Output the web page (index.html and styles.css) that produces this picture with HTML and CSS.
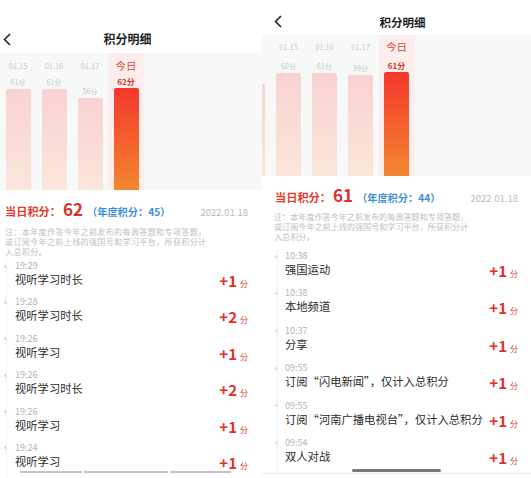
FILE: index.html
```html
<!DOCTYPE html>
<html>
<head>
  <title>积分明细</title>
  <link rel="stylesheet" href="styles.css">
</head>
<body>
  <div class="screens">

    <section class="phone phone-a">
      <header class="topbar">
        <svg class="back" width="8" height="13" viewBox="0 0 8 13"><polyline points="7,1 1.5,6.5 7,12" fill="none" stroke="#222" stroke-width="1.6"/></svg>
        <h1 class="title">积分明细</h1>
      </header>
      <div class="chart">
        <div class="bars">
          <div class="col"><span class="day">01.15</span><span class="score">61分</span><div class="bar" style="height:101px"></div></div>
          <div class="col"><span class="day">01.16</span><span class="score">61分</span><div class="bar" style="height:101px"></div></div>
          <div class="col"><span class="day">01.17</span><span class="score">56分</span><div class="bar" style="height:92px"></div></div>
          <div class="col today"><span class="day">今日</span><span class="score">62分</span><div class="bar" style="height:102px"></div></div>
        </div>
      </div>
      <div class="summary">
        <span class="label">当日积分：</span><span class="total">62</span><span class="year">（年度积分：45）</span><span class="date">2022.01.18</span>
      </div>
      <p class="note">注：本年度作答今年之前发布的每周答题和专项答题，<br>或订阅今年之前上线的强国号和学习平台，所获积分计<br>入总积分。</p>
      <ul class="records">
        <li class="record"><i class="dot"></i><span class="time">19:29</span><span class="name">视听学习时长</span><span class="pts"><b>+1</b>分</span></li>
        <li class="record"><i class="dot"></i><span class="time">19:28</span><span class="name">视听学习时长</span><span class="pts"><b>+2</b>分</span></li>
        <li class="record"><i class="dot"></i><span class="time">19:26</span><span class="name">视听学习</span><span class="pts"><b>+1</b>分</span></li>
        <li class="record"><i class="dot"></i><span class="time">19:26</span><span class="name">视听学习时长</span><span class="pts"><b>+2</b>分</span></li>
        <li class="record"><i class="dot"></i><span class="time">19:26</span><span class="name">视听学习</span><span class="pts"><b>+1</b>分</span></li>
        <li class="record"><i class="dot"></i><span class="time">19:24</span><span class="name">视听学习</span><span class="pts"><b>+1</b>分</span></li>
      </ul>
      <div class="home-bar">
        <span class="seg seg-1"></span><span class="seg seg-2"></span><span class="seg seg-3"></span>
      </div>
    </section>

    <section class="phone phone-b">
      <header class="topbar">
        <svg class="back" width="8" height="13" viewBox="0 0 8 13"><polyline points="7,1 1.5,6.5 7,12" fill="none" stroke="#222" stroke-width="1.6"/></svg>
        <h1 class="title">积分明细</h1>
      </header>
      <div class="chart">
        <div class="bars">
          <div class="col"><span class="day"></span><div class="bar" style="height:92px"></div></div>
          <div class="col"><span class="day">01.15</span><span class="score">60分</span><div class="bar" style="height:103px"></div></div>
          <div class="col"><span class="day">01.16</span><span class="score">61分</span><div class="bar" style="height:103px"></div></div>
          <div class="col"><span class="day">01.17</span><span class="score">59分</span><div class="bar" style="height:101px"></div></div>
          <div class="col today"><span class="day">今日</span><span class="score">61分</span><div class="bar" style="height:104px"></div></div>
        </div>
      </div>
      <div class="summary">
        <span class="label">当日积分：</span><span class="total">61</span><span class="year">（年度积分：44）</span><span class="date">2022.01.18</span>
      </div>
      <p class="note">注：本年度作答今年之前发布的每周答题和专项答题，<br>或订阅今年之前上线的强国号和学习平台，所获积分计<br>入总积分。</p>
      <ul class="records">
        <li class="record"><i class="dot"></i><span class="time">10:38</span><span class="name">强国运动</span><span class="pts"><b>+1</b>分</span></li>
        <li class="record"><i class="dot"></i><span class="time">10:38</span><span class="name">本地频道</span><span class="pts"><b>+1</b>分</span></li>
        <li class="record"><i class="dot"></i><span class="time">10:37</span><span class="name">分享</span><span class="pts"><b>+1</b>分</span></li>
        <li class="record"><i class="dot"></i><span class="time">09:55</span><span class="name">订阅“闪电新闻”，仅计入总积分</span><span class="pts"><b>+1</b>分</span></li>
        <li class="record"><i class="dot"></i><span class="time">09:55</span><span class="name">订阅“河南广播电视台”，仅计入总积分</span><span class="pts"><b>+1</b>分</span></li>
        <li class="record"><i class="dot"></i><span class="time">09:54</span><span class="name">双人对战</span><span class="pts"><b>+1</b>分</span></li>
      </ul>
      <div class="home-bar">
        <span class="indicator"></span>
      </div>
    </section>

  </div>
</body>
</html>
```

FILE: styles.css
```css
body { margin: 0; font-family: "Noto Sans CJK SC", "Noto Sans", sans-serif; color: #222; background: #fff; }
.screens { display: flex; width: 531px; height: 478px; overflow: hidden; }

.phone { position: relative; height: 478px; overflow: hidden; background: #fff; display: flex; flex-direction: column; }
.phone-a { width: 262px; }
.phone-b { width: 269px; }

/* title bar */
.topbar { display: grid; grid-template-columns: 1fr auto 1fr; align-items: center; flex: none; }
.phone-a .topbar { margin-top: 25px; height: 28px; padding: 0 10px 0 3px; }
.phone-b .topbar { margin-top: 8px; height: 27px; padding: 0 0 0 12px; }
.back { display: block; }
.title { margin: 0; font-size: 12px; font-weight: bold; line-height: 14px; color: #1e1e1e; }
.phone-b .title { font-size: 11.5px; }

/* chart */
.chart { background: #f7f9f9; overflow: hidden; flex: none; }
.phone-a .chart { height: 137px; }
.phone-b .chart { height: 141px; }
.bars { display: flex; height: 100%; }
.phone-b .bars { margin-left: -27.5px; }
.col { width: 36px; flex: none; display: flex; flex-direction: column; align-items: center; }
.day { font-size: 7.5px; line-height: 10px; height: 10px; color: #c9caca; margin-top: 8px; }
.phone-b .day { margin-top: 7px; }
.score { margin-top: auto; margin-bottom: 2px; font-size: 7px; line-height: 9px; color: #c6c6c6; }
.bar { margin-top: auto; width: 25px; border-radius: 2px 2px 0 0; background: linear-gradient(#f8d2d2, #fbe6da); }
.score + .bar { margin-top: 0; }
.today { background: #fdeeee; }
.today .day { font-size: 10.5px; color: #e0493b; }
.today .score { font-size: 8px; font-weight: bold; color: #d9352a; }
.today .bar { background: linear-gradient(#f3382c, #f4862f); }

/* summary */
.summary { display: flex; align-items: baseline; height: 20px; line-height: 20px; margin-top: 9px; flex: none; }
.phone-a .summary { padding: 0 14px 0 5px; }
.phone-b .summary { padding: 0 13px 0 13px; }
.label { font-size: 11.2px; font-weight: bold; color: #e23a2e; }
.total { font-size: 17px; font-weight: bold; color: #de2f24; margin-left: 2px; }
.year { font-size: 10.2px; font-weight: bold; color: #3f90d8; margin-left: 4px; }
.date { margin-left: auto; font-size: 9.5px; color: #b9b9b9; }

/* note */
.note { margin: 8px 0 0; font-size: 8.1px; line-height: 10px; color: #c0c0c0; flex: none; }
.phone-a .note { padding-left: 5px; letter-spacing: 0.3px; }
.phone-b .note { margin-top: 7px; padding-left: 12px; }

/* records */
.records { list-style: none; margin: 3px 0 0; padding: 0; flex: none; }
.phone-b .records { margin-top: 8px; }
.record {
  display: grid;
  grid-template-columns: 10px 1fr auto;
  grid-template-rows: 12px 14px;
  background: linear-gradient(#f1f2f2, #f1f2f2) no-repeat 5.5px 0 / 1px 100%;
}
.phone-a .record { height: 36.4px; padding: 0 14px 0 4px; }
.phone-b .record { height: 37.4px; padding: 0 13px 0 13px; background-position: 14.5px 0; }
.dot { grid-row: 1; grid-column: 1; align-self: center; width: 3px; height: 3px; border-radius: 50%; background: #dedede; }
.time { grid-row: 1; grid-column: 2; font-size: 9px; line-height: 12px; color: #b3b3b3; }
.name { grid-row: 2; grid-column: 2; font-size: 11.3px; line-height: 14px; color: #2b2b2b; white-space: nowrap; }
.phone-a .time, .phone-a .name { margin-left: 1px; }
.pts { grid-row: 2; grid-column: 3; align-self: center; margin-top: 3px; font-size: 8px; color: #e0392d; white-space: nowrap; }
.pts b { font-size: 15px; font-weight: bold; color: #e0302a; margin-right: 3px; }

/* home indicator */
.home-bar { position: absolute; left: 0; right: 0; bottom: 0; height: 8px; }
.seg { position: absolute; top: 1px; height: 2px; background: #c4c4c4; }
.seg-1 { left: 20px; width: 62px; }
.seg-2 { left: 84px; width: 84px; }
.seg-3 { left: 170px; width: 61px; }
.phone-b .home-bar { border-top: 1px solid #ececec; height: 4px; }
.indicator { position: absolute; left: 90px; top: -5px; width: 89px; height: 3px; border-radius: 2px; background: #7a7a7a; }
```
